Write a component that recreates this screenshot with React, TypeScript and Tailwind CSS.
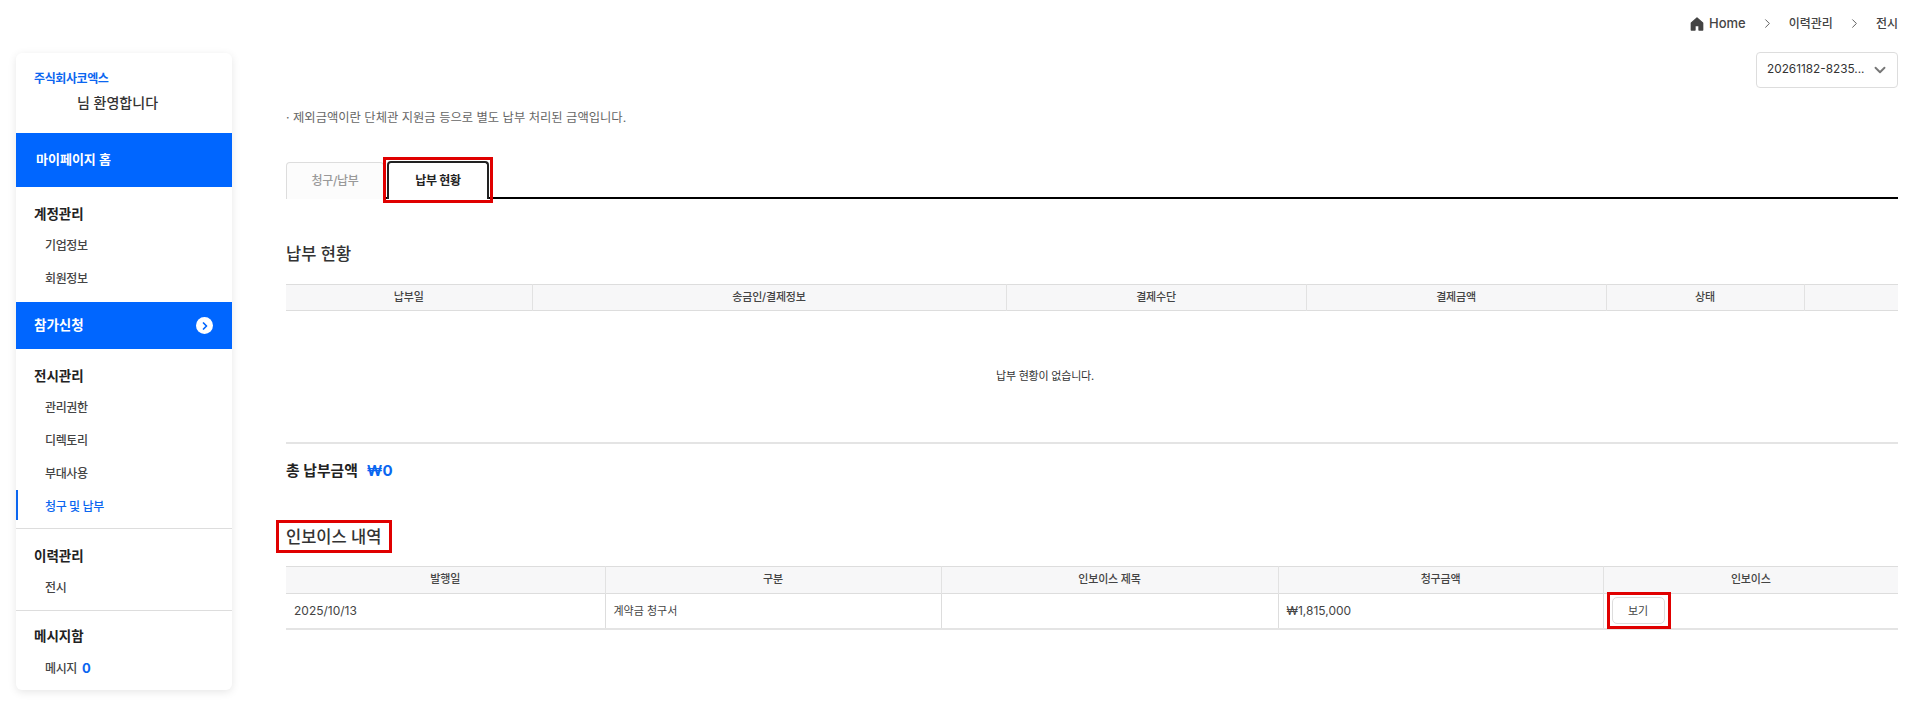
import { ChevronDown, ChevronRight } from "lucide-react";

const font = "font-['Inter','Noto_Sans_CJK_KR',sans-serif]";

function SubItem({ label, active }: { label: string; active?: boolean }) {
  return (
    <div className={`relative flex h-[33px] items-center pl-[29px] text-[12px] font-medium tracking-[-0.4px] ${active ? "text-[#0b66f0]" : "text-[#444]"}`}>
      {active && <span className="absolute left-0 top-0 h-[30px] w-[2px] bg-[#0b66f0]" />}
      {label}
    </div>
  );
}

function GroupTitle({ label }: { label: string }) {
  return <div className="pl-[18px] text-[13.5px] font-semibold leading-[20px] text-[#222]">{label}</div>;
}

function HomeIcon() {
  return (
    <svg width="16" height="16" viewBox="0 0 24 24" fill="#444" stroke="#444" strokeWidth="2" strokeLinejoin="round">
      <path d="M12 3 3.5 10.5V21H9v-6.5h6V21h5.5V10.5z" />
    </svg>
  );
}

function Sidebar() {
  return (
    <aside className="mt-[53px] ml-4 h-[637px] w-[216px] shrink-0 rounded-md bg-white shadow-[0_2px_8px_rgba(0,0,0,0.1)]">
      <div className="h-[80px] pt-[18px]">
        <p className="pl-[18px] text-[12px] font-semibold leading-[16px] tracking-[-0.4px] text-[#0b66f0]">주식회사코엑스</p>
        <p className="mt-[6px] pl-[61px] text-[14px] font-medium leading-[20px] text-[#333]">님 환영합니다</p>
      </div>
      <div className="flex h-[54px] items-center bg-[#0066ff] pl-5 text-[13px] font-semibold text-white">마이페이지 홈</div>
      <div className="h-[115px] pt-[17px]">
        <GroupTitle label="계정관리" />
        <div className="mt-[5px]">
          <SubItem label="기업정보" />
          <SubItem label="회원정보" />
        </div>
      </div>
      <div className="flex h-[47px] items-center justify-between bg-[#0066ff] pr-[19px] pl-[18px] text-[13.5px] font-semibold text-white">
        참가신청
        <span className="flex h-[17px] w-[17px] items-center justify-center rounded-full bg-white text-[#0066ff]">
          <ChevronRight size={12} strokeWidth={3.5} />
        </span>
      </div>
      <div className="h-[180px] border-b border-[#ddd] pt-[17px]">
        <GroupTitle label="전시관리" />
        <div className="mt-[5px]">
          <SubItem label="관리권한" />
          <SubItem label="디렉토리" />
          <SubItem label="부대사용" />
          <SubItem label="청구 및 납부" active />
        </div>
      </div>
      <div className="h-[82px] border-b border-[#ddd] pt-[17px]">
        <GroupTitle label="이력관리" />
        <div className="mt-[5px]">
          <SubItem label="전시" />
        </div>
      </div>
      <div className="pt-[15px]">
        <GroupTitle label="메시지함" />
        <div className="mt-[6px] flex h-[33px] items-center pl-[29px] text-[12px] font-medium tracking-[-0.4px] text-[#444]">
          메시지 <span className="ml-[5px] text-[13px] font-bold text-[#0b66f0]">0</span>
        </div>
      </div>
    </aside>
  );
}

const th = "border-r border-[#e2e2e2] h-[26px] p-0 text-center text-[11px] font-medium tracking-[-0.2px] text-[#444] last:border-r-0";

function PaymentTable() {
  return (
    <table className="w-full table-fixed border-collapse">
      <colgroup>
        <col className="w-[246px]" />
        <col className="w-[474px]" />
        <col className="w-[300px]" />
        <col className="w-[300px]" />
        <col className="w-[198px]" />
        <col />
      </colgroup>
      <thead>
        <tr className="border-y border-[#ddd] bg-[#f7f7f8]">
          <th className={th}>납부일</th>
          <th className={th}>송금인/결제정보</th>
          <th className={th}>결제수단</th>
          <th className={th}>결제금액</th>
          <th className={th}>상태</th>
          <th className={th}></th>
        </tr>
      </thead>
      <tbody>
        <tr className="border-b-2 border-[#e4e4e4]">
          <td colSpan={5} className="h-[132px] p-0 text-center text-[11px] tracking-[-0.2px] text-[#333]">납부 현황이 없습니다.</td>
          <td></td>
        </tr>
      </tbody>
    </table>
  );
}

function InvoiceTable() {
  const td = "border-r border-[#ddd] px-2 text-[11px] text-[#444] last:border-r-0";
  return (
    <table className="w-full table-fixed border-collapse">
      <colgroup>
        <col className="w-[319px]" />
        <col className="w-[336px]" />
        <col className="w-[337px]" />
        <col className="w-[325px]" />
        <col />
      </colgroup>
      <thead>
        <tr className="h-[27px] border-y border-[#ddd] bg-[#f7f7f8]">
          <th className={th}>발행일</th>
          <th className={th}>구분</th>
          <th className={th}>인보이스 제목</th>
          <th className={th}>청구금액</th>
          <th className={th}>인보이스</th>
        </tr>
      </thead>
      <tbody>
        <tr className="h-[36px] border-b-2 border-[#e4e4e4]">
          <td className={`${td} text-[12px]`}>2025/10/13</td>
          <td className={td}>계약금 청구서</td>
          <td className={td}></td>
          <td className={`${td} text-[12px]`}>₩1,815,000</td>
          <td className={td}>
            <div className="relative h-[27px] w-[53px]">
              <button className="h-full w-full rounded-[5px] border border-[#ddd] bg-white text-[11px] text-[#444]">보기</button>
              <span className="absolute -top-[5px] -right-[6px] -bottom-[5px] -left-[5px] border-[3px] border-[#e00000]" />
            </div>
          </td>
        </tr>
      </tbody>
    </table>
  );
}

export default function App() {
  return (
    <div className={`${font} flex h-[710px] w-[1911px] overflow-hidden bg-white`}>
      <Sidebar />
      <main className="mr-[13px] ml-[54px] flex-1">
        <div className="flex h-[46px] items-center justify-end pt-[1px] text-[13px] font-medium text-[#444]">
          <HomeIcon />
          <span className="ml-[4px]">Home</span>
          <ChevronRight size={15} strokeWidth={1.5} className="mx-[14px] text-[#555]" />
          <span className="text-[12px]">이력관리</span>
          <ChevronRight size={15} strokeWidth={1.5} className="mx-[14px] text-[#555]" />
          <span className="text-[12px]">전시</span>
        </div>
        <div className="mt-[6px] flex justify-end">
          <div className="flex h-[36px] w-[142px] items-center justify-between rounded-[4px] border border-[#ddd] pr-[8px] pl-[10px] text-[11.8px] text-[#333]">
            20261182-8235...
            <ChevronDown size={18} strokeWidth={2.5} className="text-[#777]" />
          </div>
        </div>
        <p className="mt-[21px] text-[12.3px] leading-[18px] text-[#666]">· 제외금액이란 단체관 지원금 등으로 별도 납부 처리된 금액입니다.</p>
        <div className="mt-[34px] flex h-[38px] items-end border-b-2 border-black">
          <div className="mb-[-2px] flex h-[37px] w-[98px] items-center justify-center rounded-t-[4px] border border-b-0 border-[#ddd] bg-[#fcfcfc] text-[12px] font-medium tracking-[-0.3px] text-[#999]">청구/납부</div>
          <div className="relative mb-[-2px] ml-[3px] flex h-[38px] w-[102px] items-center justify-center rounded-t-[4px] border-2 border-b-0 border-[#222] bg-white text-[12px] font-semibold tracking-[-0.3px] text-[#222]">
            납부 현황
            <span className="absolute -top-[6px] -right-[6px] -bottom-[4px] -left-[6px] border-[3px] border-[#e00000]" />
          </div>
        </div>
        <h2 className="mt-[43px] text-[16.5px] leading-[24px] font-medium text-[#333]">납부 현황</h2>
        <div className="mt-[18px]">
          <PaymentTable />
        </div>
        <p className="mt-[16px] flex items-center text-[14.8px] leading-[22px] font-semibold text-[#222]">
          총 납부금액
          <span className="ml-[9px] text-[15px] font-bold text-[#0b66f0]">₩0</span>
        </p>
        <h2 className="relative mt-[42px] w-fit text-[16.5px] leading-[26px] font-medium text-[#333]">
          인보이스 내역
          <span className="absolute -top-[4px] -right-[11px] -bottom-[3px] -left-[10px] border-[3px] border-[#e00000]" />
        </h2>
        <div className="mt-[16px]">
          <InvoiceTable />
        </div>
      </main>
    </div>
  );
}
